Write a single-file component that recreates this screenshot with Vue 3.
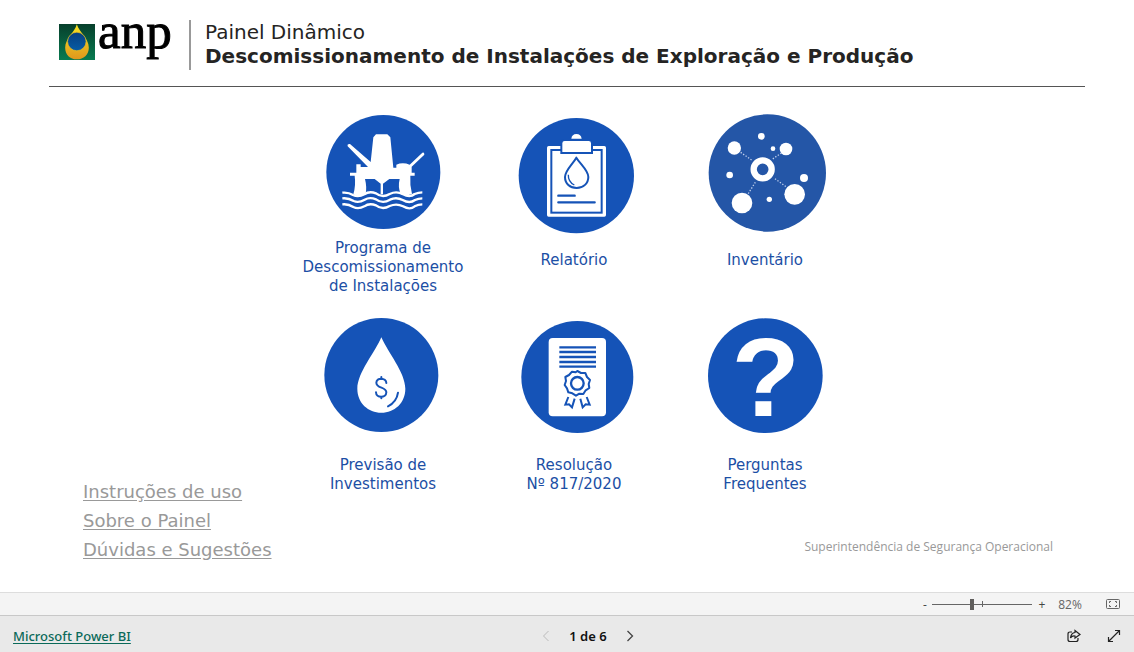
<script setup>
import { ref } from 'vue'

const zoom = ref(82)
const page = ref(1)
const pages = 6
</script>

<template>
  <div class="viewer">
    <main class="report">
      <header class="head">
        <div class="logo">
          <svg class="logo-mark" viewBox="0 0 105 105" aria-hidden="true">
            <defs>
              <linearGradient id="green" x2="0" y2="1"><stop stop-color="#073f2c" /><stop offset="1" stop-color="#087b50" /></linearGradient>
              <linearGradient id="gold" x2="0" y2="1"><stop stop-color="#f8e322" /><stop offset="1" stop-color="#df971d" /></linearGradient>
              <linearGradient id="sea" x2="0" y2="1"><stop stop-color="#083f80" /><stop offset="1" stop-color="#075ca5" /></linearGradient>
            </defs>
            <path fill="url(#green)" d="M0 0h105v105H0z" />
            <path fill="url(#gold)" d="M52 1C46 24 18 42 18 69c0 20 14 34 34 34s35-14 35-34C87 42 59 24 52 1Z" />
            <circle cx="52" cy="51" r="27" fill="url(#sea)" stroke="#e5bd22" stroke-width="2" />
          </svg>
          <span class="logo-name">anp</span>
        </div>
        <h1 class="title"><span class="kicker">Painel Dinâmico</span>Descomissionamento de Instalações de Exploração e Produção</h1>
      </header>

      <div class="body">
        <nav class="help">
          <a href="#uso">Instruções de uso</a>
          <a href="#sobre">Sobre o Painel</a>
          <a href="#duvidas">Dúvidas e Sugestões</a>
        </nav>

        <nav class="tiles">
          <a class="tile snug" href="#programa">
            <svg viewBox="0 0 390 390" aria-hidden="true">
              <circle class="disc" cx="196" cy="201" r="171" />
              <g fill="#fff">
                <path d="M166 97 174 88H208L217 97 226 188H235V179Q254 171 275 179L313 143Q319 140 319 149L281 185V203H290V212H277Q275 240 282 267Q262 275 248 267Q239 246 245 222H214L195 236V268H188V236L170 222H141Q147 246 143 267Q124 281 106 268Q114 240 110 212H96V203H115V178H128V186H150L89 124Q87 116 96 117L158 171Z" />
              </g>
              <g fill="none" stroke="#fff" stroke-width="7">
                <path d="M73 263Q91 261 105 270Q121 278 139 268Q154 257 174 265Q193 280 215 267Q236 257 255 268Q276 279 290 267Q301 262 313 262" />
                <path d="M73 280Q91 278 107 288Q122 295 140 284Q155 275 174 283Q194 298 216 284Q235 275 254 285Q275 297 291 285Q301 280 313 280" />
                <path d="M73 298Q91 296 106 306Q121 314 139 304Q154 293 174 301Q193 316 215 303Q236 294 255 304Q276 316 290 304Q301 298 313 298" />
              </g>
            </svg>
            <span>Programa de<br>Descomissionamento<br>de Instalações</span>
          </a>
          <a class="tile" href="#relatorio">
            <svg viewBox="-3 0 390 390" aria-hidden="true">
              <circle class="disc" cx="199" cy="212" r="173" />
              <rect x="111" y="123" width="177" height="212" rx="5" fill="#fff" />
              <rect class="line" x="124" y="135" width="151" height="188" stroke-width="6" />
              <path fill="#fff" stroke="#1553b7" stroke-width="6" d="M154 144V115Q154 105 164 105H236Q246 105 246 115V144Z" />
              <path fill="#fff" d="M184 101Q186 87 199 87Q213 87 215 101Z" />
              <path class="line" stroke-width="6" stroke-linejoin="round" d="M199 158C188 178 165 196 165 216C165 236 180 249 200 249S235 235 235 216C235 196 211 178 199 158Z" />
              <path class="line" stroke-width="4" d="M175 209Q174 230 193 240" />
              <path class="line" stroke-width="7" stroke-linecap="round" d="M145 272H194M145 292H254" />
            </svg>
            <span>Relatório</span>
          </a>
          <a class="tile" href="#inventario">
            <svg viewBox="0 0 390 390" aria-hidden="true">
              <circle cx="202" cy="204" r="176" fill="#2456a7" />
              <g fill="none" stroke="#bdcdeb" stroke-width="4" stroke-dasharray="4 5"><path d="M122 142 156 166M244 144 215 164M225 221 258 245M166 232 144 267" /></g>
              <circle cx="188" cy="193" r="27" fill="none" stroke="#fff" stroke-width="19" />
              <g fill="#fff">
                <circle cx="103" cy="129" r="20" /><circle cx="258" cy="132" r="19" /><circle cx="126" cy="294" r="31" /><circle cx="284" cy="268" r="31" />
                <circle cx="184" cy="94" r="10" /><circle cx="219" cy="131" r="7" /><circle cx="89" cy="210" r="10" /><circle cx="312" cy="219" r="12" /><circle cx="208" cy="283" r="8" />
              </g>
            </svg>
            <span>Inventário</span>
          </a>
          <a class="tile" href="#previsao">
            <svg viewBox="9 0 390 390" aria-hidden="true">
              <circle class="disc" cx="199" cy="195" r="171" />
              <path fill="#fff" d="M199 82C181 126 127 188 127 236C127 279 160 308 199 308S271 279 271 236C271 188 218 126 199 82Z" />
              <path class="line" stroke-width="6" stroke-linecap="round" d="M214 219C214 203 184 201 184 218C184 236 214 230 214 247C214 265 183 265 183 247M199 201V207M199 260V265M249 248Q245 276 219 289" />
            </svg>
            <span>Previsão de<br>Investimentos</span>
          </a>
          <a class="tile" href="#resolucao">
            <svg viewBox="-3 0 390 390" aria-hidden="true">
              <circle class="disc" cx="202" cy="201" r="168" />
              <rect x="116" y="84" width="172" height="235" rx="12" fill="#fff" />
              <path class="line" stroke-width="7" d="M148 112H258M148 126H258M148 141H258M148 156H258M148 170H258" />
              <path class="line" stroke-width="6" stroke-linejoin="round" d="M202 183 213 189 226 189 231 201 240 210 236 222 238 234 227 241 220 252 208 251 198 257 187 250 175 247 171 235 164 225 168 213 166 201 177 195 186 185 197 187Z" />
              <circle class="line" cx="202" cy="220" r="19" stroke-width="7" />
              <path class="line" stroke-width="6" d="M175 261 166 284 177 283 186 292 194 266M211 266 218 292 227 283 239 284 230 261" />
            </svg>
            <span>Resolução<br>Nº 817/2020</span>
          </a>
          <a class="tile" href="#perguntas">
            <svg viewBox="0 0 390 390" aria-hidden="true">
              <circle class="disc" cx="196" cy="197" r="172" />
              <text class="mark" x="197" y="318">?</text>
            </svg>
            <span>Perguntas<br>Frequentes</span>
          </a>
        </nav>

        <p class="credit">Superintendência de Segurança Operacional</p>
      </div>
    </main>

    <div class="zoombar">
      <button type="button" aria-label="Reduzir" @click="zoom = Math.max(10, zoom - 10)">-</button>
      <div class="slider">
        <input v-model.number="zoom" type="range" min="10" max="190" aria-label="Zoom">
      </div>
      <button type="button" aria-label="Ampliar" @click="zoom = Math.min(190, zoom + 10)">+</button>
      <output>{{ zoom }}%</output>
      <button class="fit" type="button" aria-label="Ajustar à página">
        <svg width="14" height="12" viewBox="0 0 14 12" fill="none" stroke="#666"><rect x=".5" y="1.5" width="13" height="9" rx="1" /><path d="M5 3.500H3.500V5M3.500 7V8.500H5M9 3.500H10.500V5M10.500 7V8.500H9" /></svg>
      </button>
    </div>

    <footer class="foot">
      <a class="brand" href="#powerbi">Microsoft Power BI</a>
      <div class="pager">
        <button type="button" aria-label="Página anterior" :disabled="page === 1" @click="page--">
          <svg width="8" height="12" viewBox="0 0 8 12" fill="none" stroke="currentColor"><path d="M6.500 1 1.500 6l5 5" /></svg>
        </button>
        <span>{{ page }} de {{ pages }}</span>
        <button type="button" aria-label="Próxima página" :disabled="page === pages" @click="page++">
          <svg width="8" height="12" viewBox="0 0 8 12" fill="none" stroke="currentColor" stroke-width="1.300"><path d="m1.500 1 5 5-5 5" /></svg>
        </button>
      </div>
      <div class="actions">
        <button type="button" aria-label="Compartilhar">
          <svg width="14" height="14" viewBox="0 0 14 14" fill="none" stroke="#222" stroke-width="1.200"><path d="M5 3H3Q1 3 1 5V10.500Q1 12.500 3 12.500H9Q11 12.500 11 10.500V9M8 1.500 13 5.500 8 9V7Q5 6.500 3.500 9Q4 4 8 3.500Z" /></svg>
        </button>
        <button type="button" aria-label="Tela cheia">
          <svg width="14" height="14" viewBox="0 0 14 14" fill="none" stroke="#222" stroke-width="1.200"><path d="M1.500 12.500 12.500 1.500M8 1.500H12.500V6M1.500 8V12.500H6" /></svg>
        </button>
      </div>
    </footer>
  </div>
</template>

<style>
body { margin: 0; }
</style>

<style scoped>
.viewer {
  display: flex;
  flex-direction: column;
  min-height: 100vh;
  background: #fff;
  font-family: "Open Sans", "Noto Sans", sans-serif;
}
.report {
  display: flex;
  flex: 1;
  flex-direction: column;
  font-family: "DejaVu Sans", sans-serif;
}
.head {
  display: flex;
  box-sizing: border-box;
  height: 87px;
  margin: 0 49px;
  padding: 20px 0 16px 10px;
  border-bottom: 1px solid #555;
}
.logo {
  display: flex;
  align-items: flex-start;
  gap: 3px;
  width: 132px;
  border-right: 2px solid #999;
  box-sizing: border-box;
}
.logo-mark { flex: none; width: 36px; height: 36px; margin-top: 4px; }
.logo-name {
  color: #000;
  font-family: "Liberation Serif", serif;
  font-size: 51px;
  line-height: 22px;
  -webkit-text-stroke: 1px #000;
}
.title {
  margin: 0 0 0 14px;
  color: #252423;
  font-size: 20px;
  font-weight: bold;
  line-height: 24px;
  white-space: nowrap;
}
.kicker { display: block; font-weight: normal; }
.body {
  display: grid;
  flex: 1;
  grid-template-columns: minmax(0, 1fr) 572px minmax(0, 1fr);
  grid-template-rows: auto 1fr;
  padding: 18px 69px 30px 83px;
}
.help {
  display: flex;
  grid-row: 1 / 3;
  grid-column: 1;
  flex-direction: column;
  align-items: flex-start;
  align-self: end;
  gap: 5px;
}
.help a {
  color: #999;
  font-size: 18px;
  line-height: 24px;
  white-space: nowrap;
  text-underline-offset: 2px;
}
.tiles {
  display: grid;
  grid-column: 2;
  grid-template-columns: repeat(3, 190px);
  grid-template-rows: 205px auto;
  column-gap: 1px;
}
.tile {
  display: flex;
  flex-direction: column;
  align-items: center;
  gap: 16px;
  color: #1c4fa5;
  font-size: 15px;
  line-height: 19px;
  text-align: center;
  text-decoration: none;
}
.tile.snug { gap: 4px; }
.tile svg { flex: none; width: 130px; height: 130px; }
.disc { fill: #1553b7; }
.line { fill: none; stroke: #1553b7; }
.mark {
  fill: #fff;
  font: bold 336px "Liberation Sans", sans-serif;
  text-anchor: middle;
}
.credit {
  grid-row: 2;
  grid-column: 2 / 4;
  align-self: end;
  justify-self: end;
  margin: 0 12px 7px 0;
  color: #999;
  font-family: "Open Sans", sans-serif;
  font-size: 12px;
  line-height: 16px;
}
button {
  display: flex;
  align-items: center;
  justify-content: center;
  padding: 0;
  border: 0;
  background: none;
  color: #444;
  font: inherit;
}
.zoombar {
  display: flex;
  align-items: center;
  justify-content: flex-end;
  height: 22px;
  padding-right: 14px;
  border-top: 1px solid #ddd;
  background: #f4f4f4;
  color: #666;
  font-size: 12px;
}
.zoombar button { width: 14px; height: 20px; }
.slider {
  display: flex;
  width: 100px;
  height: 12px;
  margin-right: 3px;
  background: linear-gradient(#666, #666) 50px 3px / 1px 6px no-repeat;
}
.slider input {
  width: 100%;
  height: 12px;
  margin: 0;
  appearance: none;
  background: linear-gradient(#666, #666) 0 6px / 100% 1px no-repeat;
}
.slider input::-webkit-slider-thumb {
  width: 4px;
  height: 11px;
  appearance: none;
  background: #605e5c;
}
.zoombar output { width: 34px; margin: 0 19px 0 4px; text-align: center; }
.foot {
  display: grid;
  grid-template-columns: 1fr auto 1fr;
  align-items: center;
  height: 36px;
  padding: 0 13px;
  border-top: 1px solid #c8c8c8;
  background: #e9e9e9;
  font-family: "Noto Sans", sans-serif;
  font-size: 13px;
}
.foot > * { margin-top: 3px; }
.brand { justify-self: start; color: #0b6a59; font-weight: 500; text-underline-offset: 2px; }
.pager { display: flex; align-items: center; gap: 19px; margin-left: 42px; color: #111; font-weight: 600; }
.pager button:disabled { color: #bbb; }
.actions { display: flex; justify-content: flex-end; gap: 26px; }
</style>
